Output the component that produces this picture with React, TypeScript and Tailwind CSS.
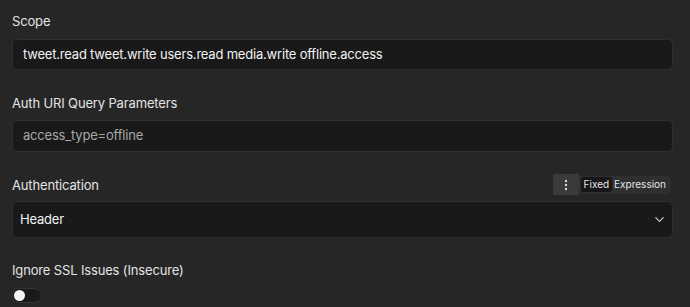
import { ChevronDown } from "lucide-react";

const Label = ({ children }: { children: React.ReactNode }) => (
  <div className="text-[13px] leading-[18px] tracking-[-0.15px] text-[#e4e4e4]">{children}</div>
);

const App = () => {
  return (
    <div
      className="w-[690px] h-[307px] bg-[#262626] overflow-hidden pl-3 pr-[17px] pt-3"
      style={{ fontFamily: "Inter, 'Noto Sans', sans-serif" }}
    >
      <div className="flex flex-col">
        <Label>Scope</Label>
        <div className="mt-[9px] h-[31px] rounded-[5px] border border-[#2f2f2f] bg-[#191919] flex items-center px-[10px] text-[13px] tracking-[-0.2px] text-[#f2f2f2]">
          tweet.read tweet.write users.read media.write offline.access
        </div>

        <div className="mt-[24px]">
          <Label>Auth URI Query Parameters</Label>
        </div>
        <div className="mt-[8px] h-[32px] rounded-[5px] border border-[#2f2f2f] bg-[#191919] flex items-center px-[10px] text-[13px] tracking-[-0.2px] text-[#a8a8a8]">
          access_type=offline
        </div>

        <div className="mt-[22px] flex items-center justify-between h-[21px]">
          <Label>Authentication</Label>
          <div className="flex items-center mr-[2px]">
            <div className="w-[26px] h-[21px] bg-[#3a3a3a] flex items-center justify-center">
              <svg width="4" height="12" viewBox="0 0 4 12" fill="#d8d8d8">
                <circle cx="2" cy="2" r="1.2" />
                <circle cx="2" cy="6" r="1.2" />
                <circle cx="2" cy="10" r="1.2" />
              </svg>
            </div>
            <div className="flex items-center h-[18px] rounded-r-[4px] bg-[#2f2f2f] px-[2px] text-[10px] text-[#e6e6e6]">
              <span className="h-[15px] flex items-center px-[3px] rounded-[3px] bg-[#161616]">Fixed</span>
              <span className="pl-[2px] pr-[3px]">Expression</span>
            </div>
          </div>
        </div>
        <div className="mt-[6px] h-[37px] rounded-[5px] border border-[#2f2f2f] bg-[#191919] flex items-center justify-between pl-[7px] pr-[5px] text-[13px] tracking-[-0.2px] text-[#f2f2f2]">
          <span>Header</span>
          <ChevronDown size={15} strokeWidth={1.8} color="#cfcfcf" />
        </div>

        <div className="mt-[23px]">
          <Label>Ignore SSL Issues (Insecure)</Label>
        </div>
        <div className="mt-[9px] w-[30px] h-[15px] rounded-full bg-[#1a1a1a] border border-[#333] flex items-center pl-[1px]">
          <div className="w-[11px] h-[11px] rounded-full bg-[#f4f4f4]" />
        </div>
      </div>
    </div>
  );
};

export default App;
